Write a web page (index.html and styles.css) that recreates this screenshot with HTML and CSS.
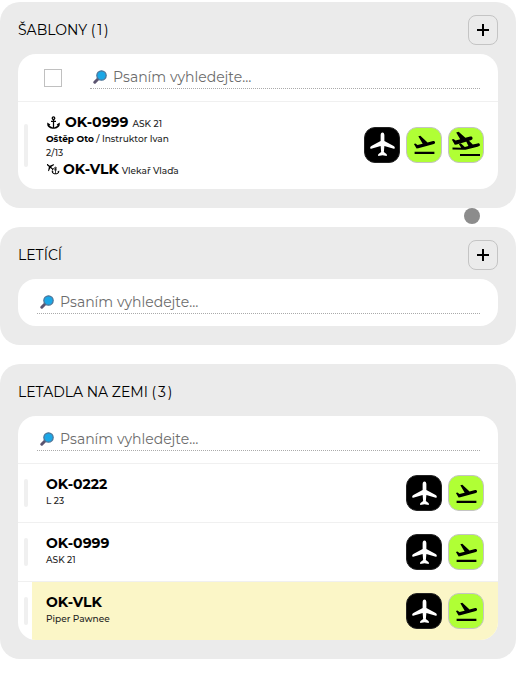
FILE: index.html
```html
<!DOCTYPE html>
<html lang="cs">
<head>
  <meta charset="UTF-8" />
  <meta name="viewport" content="width=device-width, initial-scale=1.0"/>
  <title>Letadla</title>
  <link rel="stylesheet" href="styles.css">
</head>
<body>
  <!-- Shared icons -->
  <svg class="icon-defs" width="0" height="0" aria-hidden="true">
    <symbol id="plane" viewBox="0 0 24 24">
      <path d="M12 .5c1.200 0 1.800 1.200 1.800 2.500v5.600l8.900 4.900c.8.500 1.100 1 1.100 1.900 0 .6-.4.8-1 .6l-9-2.600-.5 5.900 2.500 1.900c.5.400.6 1.700.2 1.800L12 22.300 8 23c-.4-.1-.3-1.400.2-1.800l2.500-1.900-.5-5.900-9 2.600c-.6.2-1 0-1-.6 0-.9.300-1.400 1.100-1.900l8.900-4.900V3c0-1.300.6-2.500 1.800-2.500z"/>
    </symbol>
    <symbol id="takeoff" viewBox="0 0 24 24">
      <path d="M2.500 19h19v2h-19v-2zm19.570-9.360c-.21-.8-1.040-1.280-1.840-1.060L14.920 10l-6.900-6.430-1.930.51 4.140 7.170-4.970 1.330-1.970-1.540-1.450.39 1.820 3.160.77 1.330 1.600-.43 5.310-1.420 4.350-1.160L21 11.490c.81-.23 1.280-1.050 1.070-1.850z"/>
    </symbol>
    <symbol id="tow" viewBox="0 0 30 28">
      <path d="M21.500 6.800c-.3-1.200-1.300-1.500-2.300-1.200L14.400 6.800 7.600.8l-2.400.6 4 6.800-4.600 1.300-2-1.500-1.800.5 3 5.200 1.900-.1L19 9.500c1.900-.5 2.800-1.300 2.500-2.700z"/>
      <path d="M28.900 13.600c-.3-1.200-1.300-1.500-2.300-1.200l-4.800 1.200-4.500-4.500-2.400.6 2.500 5.300-3.600 1-4.100-3.700-1.900.6 2.400 3.900-8.700-.3v2l11 .2 2 .1 12-3c1.700-.4 2.700-.9 2.400-2.200zM9 23h20v2H9z"/>
    </symbol>
    <symbol id="anchor" viewBox="0 0 24 24">
      <path d="M13 9V7.820C14.160 7.400 15 6.300 15 5c0-1.650-1.350-3-3-3S9 3.350 9 5c0 1.300.84 2.400 2 2.820V9H8v2h3v8.920c-2.220-.33-4.590-1.680-5.550-3.370L7 15l-5-3v3c0 3.880 5.020 7 10 7s10-3.120 10-7v-3l-5 3 1.550 1.550c-.96 1.690-3.330 3.040-5.550 3.370V11h3V9h-3zM12 4c.55 0 1 .45 1 1s-.45 1-1 1-1-.45-1-1 .45-1 1-1z"/>
    </symbol>
    <symbol id="search" viewBox="0 0 14 14">
      <path d="M1.800 12.200 5 9" stroke="#5b5470" stroke-width="3" stroke-linecap="round"/>
      <circle cx="8.500" cy="5.500" r="4.700" fill="#1ba7e6" stroke="#4d7396" stroke-width="1.200"/>
    </symbol>
  </svg>

  <section class="panel">
    <header class="panel-header">
      <h2>ŠABLONY (&#8201;1&#8201;)</h2>
      <button class="add-btn" aria-label="Přidat šablonu"><svg viewBox="0 0 12 12"><path d="M6 0v12M0 6h12"/></svg></button>
    </header>
    <div class="card">
      <div class="search-row">
        <input class="check" type="checkbox" aria-label="Vybrat vše">
        <label class="search"><svg><use href="#search"/></svg><input type="text" placeholder="Psaním vyhledejte…" aria-label="Hledat šablonu"></label>
      </div>
      <div class="item template">
        <span class="handle"></span>
        <div class="item-body">
          <div class="info">
            <div class="line"><svg class="anchor"><use href="#anchor"/></svg><strong>OK-0999</strong> <small>ASK 21</small></div>
            <p><b>Oštěp Oto</b> / Instruktor Ivan</p>
            <p>2/13</p>
            <div class="line tug"><svg class="tug-icon" viewBox="0 0 14 14"><use href="#plane" width="9" height="9" transform="rotate(-50 5 5)"/><use href="#anchor" x="5" y="4" width="9" height="9"/></svg><strong>OK-VLK</strong> <small>Vlekař Vlaďa</small></div>
          </div>
          <div class="actions">
            <button class="act dark" aria-label="Letadlo"><svg><use href="#plane"/></svg></button>
            <button class="act" aria-label="Vzlet"><svg><use href="#takeoff"/></svg></button>
            <button class="act tow" aria-label="Vzlet ve vleku"><svg><use href="#tow"/></svg></button>
          </div>
        </div>
      </div>
    </div>
    <span class="pointer"></span>
  </section>

  <section class="panel">
    <header class="panel-header">
      <h2>LETÍCÍ</h2>
      <button class="add-btn" aria-label="Přidat let"><svg viewBox="0 0 12 12"><path d="M6 0v12M0 6h12"/></svg></button>
    </header>
    <div class="card">
      <div class="search-row">
        <label class="search"><svg><use href="#search"/></svg><input type="text" placeholder="Psaním vyhledejte…" aria-label="Hledat letící"></label>
      </div>
    </div>
  </section>

  <section class="panel">
    <header class="panel-header">
      <h2>LETADLA NA ZEMI (&#8201;3&#8201;)</h2>
    </header>
    <div class="card">
      <div class="search-row">
        <label class="search"><svg><use href="#search"/></svg><input type="text" placeholder="Psaním vyhledejte…" aria-label="Hledat letadlo"></label>
      </div>
      <div class="item">
        <span class="handle"></span>
        <div class="item-body">
          <div class="info"><strong>OK-0222</strong><p>L 23</p></div>
          <div class="actions">
            <button class="act dark" aria-label="Letadlo"><svg><use href="#plane"/></svg></button>
            <button class="act" aria-label="Vzlet"><svg><use href="#takeoff"/></svg></button>
          </div>
        </div>
      </div>
      <div class="item">
        <span class="handle"></span>
        <div class="item-body">
          <div class="info"><strong>OK-0999</strong><p>ASK 21</p></div>
          <div class="actions">
            <button class="act dark" aria-label="Letadlo"><svg><use href="#plane"/></svg></button>
            <button class="act" aria-label="Vzlet"><svg><use href="#takeoff"/></svg></button>
          </div>
        </div>
      </div>
      <div class="item highlight">
        <span class="handle"></span>
        <div class="item-body">
          <div class="info"><strong>OK-VLK</strong><p>Piper Pawnee</p></div>
          <div class="actions">
            <button class="act dark" aria-label="Letadlo"><svg><use href="#plane"/></svg></button>
            <button class="act" aria-label="Vzlet"><svg><use href="#takeoff"/></svg></button>
          </div>
        </div>
      </div>
    </div>
  </section>
</body>
</html>
```
FILE: styles.css
```css
:root {
  --panel-bg: #ebebeb;
  --line: #f0f0f0;
  --green: #b0ff35;
  --yellow: #fbf6c7;
}

* {
  box-sizing: border-box;
}

body {
  margin: 0;
  padding-top: 2px;
  font-family: Montserrat, Inter, sans-serif;
  background-color: #fff;
  color: #000;
}

.icon-defs {
  position: absolute;
}

.panel {
  position: relative;
  background-color: var(--panel-bg);
  border-radius: 20px;
  padding: 12px 18px 19px;
  margin-bottom: 19px;
}

.panel-header {
  display: flex;
  align-items: center;
  justify-content: space-between;
  height: 32px;
  margin-bottom: 8px;
}

.panel-header h2 {
  margin: 0;
  font-size: 14px;
  font-weight: 400;
}

.add-btn {
  display: flex;
  align-items: center;
  justify-content: center;
  width: 30px;
  height: 30px;
  padding: 0;
  background: none;
  border: 1px solid #c4c4c4;
  border-radius: 8px;
  cursor: pointer;
}

.add-btn svg {
  width: 12px;
  height: 12px;
  stroke: #000;
  stroke-width: 2;
}

.card {
  background-color: #fff;
  border-radius: 18px;
  overflow: hidden;
}

.search-row {
  display: flex;
  align-items: center;
  height: 47px;
  padding: 0 18px 0 19px;
}

.check {
  appearance: none;
  width: 18px;
  height: 18px;
  margin: 0 28px 0 7px;
  background-color: #fff;
  border: 1px solid #c0c0c0;
}

.search {
  display: flex;
  flex: 1;
  align-items: center;
  gap: 6px;
  height: 22px;
  padding-left: 3px;
  border-bottom: 1px dotted #aaa;
}

.search svg {
  width: 14px;
  height: 14px;
}

.search input {
  flex: 1;
  min-width: 0;
  padding: 0;
  font-family: inherit;
  font-size: 14px;
  background: none;
  border: none;
  outline: none;
}

.search input::placeholder {
  color: #6c6c6c;
}

.item {
  display: flex;
  align-items: stretch;
  border-top: 1px solid var(--line);
}

.handle {
  width: 4px;
  margin: 15px 4px 15px 6px;
  background-color: var(--line);
  border-radius: 2px;
}

.template .handle {
  margin-top: 22px;
  margin-bottom: 22px;
}

.item-body {
  display: flex;
  flex: 1;
  align-items: center;
  justify-content: space-between;
  min-height: 58px;
  padding: 0 14px;
}

.template .item-body {
  min-height: 87px;
  padding-bottom: 2px;
}

.highlight .item-body {
  background-color: var(--yellow);
}

.info {
  padding-bottom: 2px;
}

.template .info {
  padding: 2px 0 0;
}

.info strong {
  display: block;
  font-size: 14px;
  line-height: 18px;
}

.info p,
.info small {
  margin: 0;
  font-size: 9px;
  font-weight: 500;
  line-height: 16px;
  color: #222;
}

.info b {
  color: #000;
}

.template p {
  line-height: 14px;
}

.line {
  display: flex;
  align-items: baseline;
  gap: 4px;
  height: 19px;
}

.line svg {
  align-self: center;
}

.anchor {
  width: 15px;
  height: 15px;
}

.tug {
  gap: 3px;
}

.tug-icon {
  width: 14px;
  height: 14px;
}

.actions {
  display: flex;
  gap: 6px;
}

.act {
  display: flex;
  align-items: center;
  justify-content: center;
  width: 36px;
  height: 36px;
  padding: 0;
  background-color: var(--green);
  border: 1px solid #c4c4c4;
  border-radius: 11px;
  cursor: pointer;
}

.act svg {
  width: 25px;
  height: 25px;
}

.act.dark {
  background-color: #000;
  border-color: #222;
}

.act.dark svg {
  fill: #fff;
}

.act.tow svg {
  width: 30px;
  height: 28px;
}

/* touch position, over the panels */
.pointer {
  position: absolute;
  right: 36px;
  bottom: -16px;
  width: 16px;
  height: 16px;
  background-color: #8c8c8c;
  border-radius: 50%;
  z-index: 1;
}
```
